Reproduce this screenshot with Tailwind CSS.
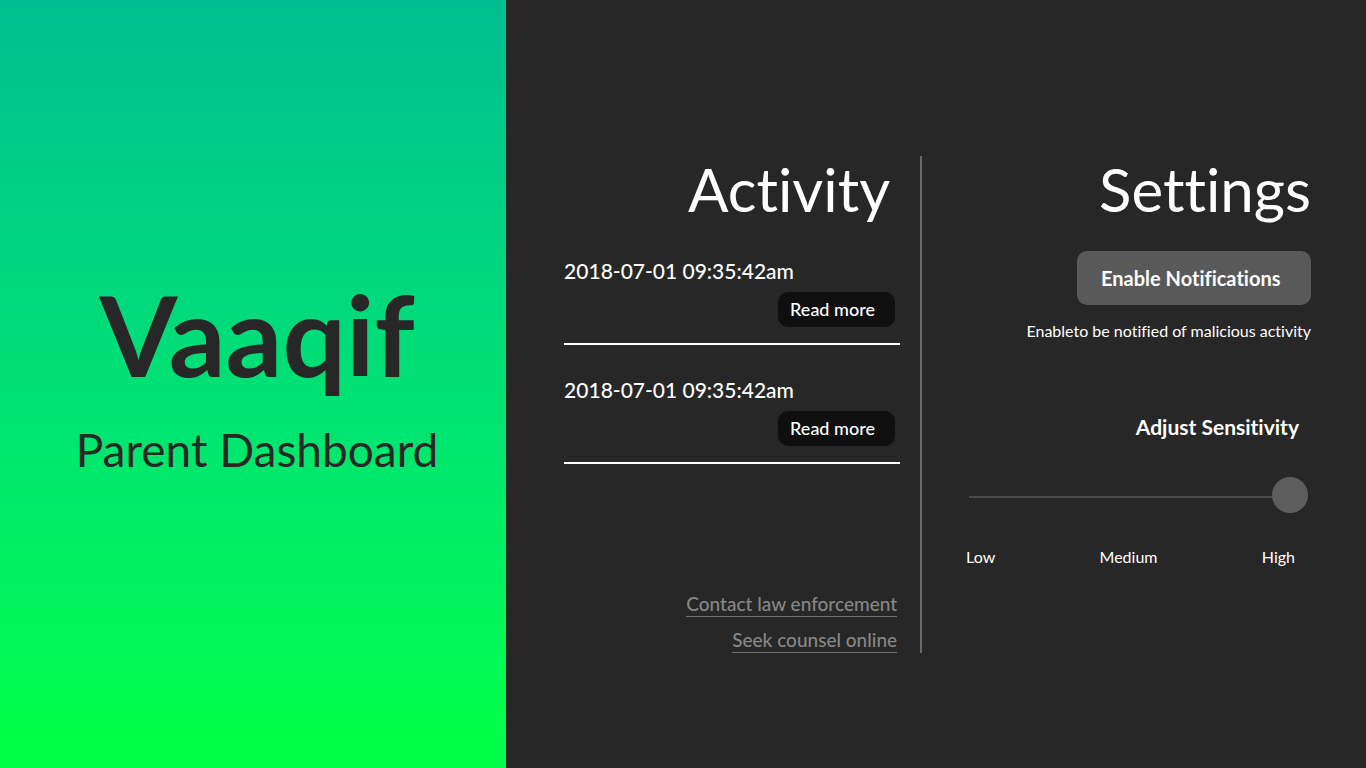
<!DOCTYPE html>
<html lang="en">
<head>
<meta charset="utf-8">
<meta name="viewport" content="width=device-width, initial-scale=1">
<title>Vaaqif Parent Dashboard</title>
<script src="https://cdn.jsdelivr.net/npm/@tailwindcss/browser@4"></script>
</head>
<body class="flex min-h-screen bg-[#272727] font-['Lato',sans-serif] text-white [font-variant-ligatures:none]">
  <header class="flex w-[37.05vw] shrink-0 flex-col items-center bg-linear-to-b from-[#00be90] to-[#00ff48] to-95% pt-[270px] pl-2 text-[#272727]">
    <h1 class="text-[112px] leading-[128px] font-bold">Vaaqif</h1>
    <p class="mt-6 text-[46px] leading-[56px]">Parent Dashboard</p>
  </header>

  <main class="flex flex-1 items-start pt-[156px]">
    <section class="flex w-[416px] flex-col border-r-2 border-[#686868] pr-5 pl-[58px]" aria-labelledby="activity">
      <h2 id="activity" class="pr-[10px] text-right text-[60px] leading-[66px]">Activity</h2>
      <ul class="mt-[35px] flex flex-col gap-[31px]">
        <li class="flex flex-col border-b-2 border-white pb-4">
          <time class="text-[21px] leading-7 font-medium">2018-07-01 09:35:42am</time>
          <button type="button" class="mt-[7px] mr-[5px] h-[35px] w-[117px] self-end rounded-[10px] bg-[#0f0f0f] pl-3 text-left text-[18px] font-medium">Read more</button>
        </li>
        <li class="flex flex-col border-b-2 border-white pb-4">
          <time class="text-[21px] leading-7 font-medium">2018-07-01 09:35:42am</time>
          <button type="button" class="mt-[7px] mr-[5px] h-[35px] w-[117px] self-end rounded-[10px] bg-[#0f0f0f] pl-3 text-left text-[18px] font-medium">Read more</button>
        </li>
      </ul>
      <nav class="mt-[128px] mr-[3px] flex flex-col items-end gap-[11px] text-[19px] leading-6 font-medium text-[#868686]">
        <a href="#law" class="border-b border-[#707070]">Contact law enforcement</a>
        <a href="#counsel" class="border-b border-[#707070]">Seek counsel online</a>
      </nav>
    </section>

    <section class="flex flex-1 flex-col pr-[55px] pl-[44px]" aria-labelledby="settings">
      <h2 id="settings" class="text-right text-[60px] leading-[66px]">Settings</h2>
      <button type="button" class="mt-[29px] h-[54px] w-[234px] self-end rounded-[10px] bg-[#595959] pl-6 text-left text-[20px] font-bold">Enable Notifications</button>
      <p class="mt-[14px] text-right text-[16px] leading-6">Enableto be notified of malicious activity</p>
      <label for="sensitivity" class="mt-[70px] self-end pr-3 text-[21px] leading-7 font-bold">Adjust Sensitivity</label>
      <div class="mt-9 pr-[3px] pl-[3px]">
        <input id="sensitivity" type="range" min="0" max="2" step="1" value="2" list="levels" class="block h-9 w-full appearance-none bg-transparent bg-[linear-gradient(#4a4a4a,#4a4a4a)] bg-[length:100%_2px] bg-[position:0_19px] bg-no-repeat [&::-webkit-slider-thumb]:size-9 [&::-webkit-slider-thumb]:appearance-none [&::-webkit-slider-thumb]:rounded-full [&::-webkit-slider-thumb]:bg-[#5d5d5d]">
      </div>
      <div class="mt-8 flex justify-between pr-4 text-[16px] leading-6">
        <span>Low</span>
        <span>Medium</span>
        <span>High</span>
      </div>
    </section>
  </main>
  <datalist id="levels"><option value="0"></option><option value="1"></option><option value="2"></option></datalist>
</body>
</html>
